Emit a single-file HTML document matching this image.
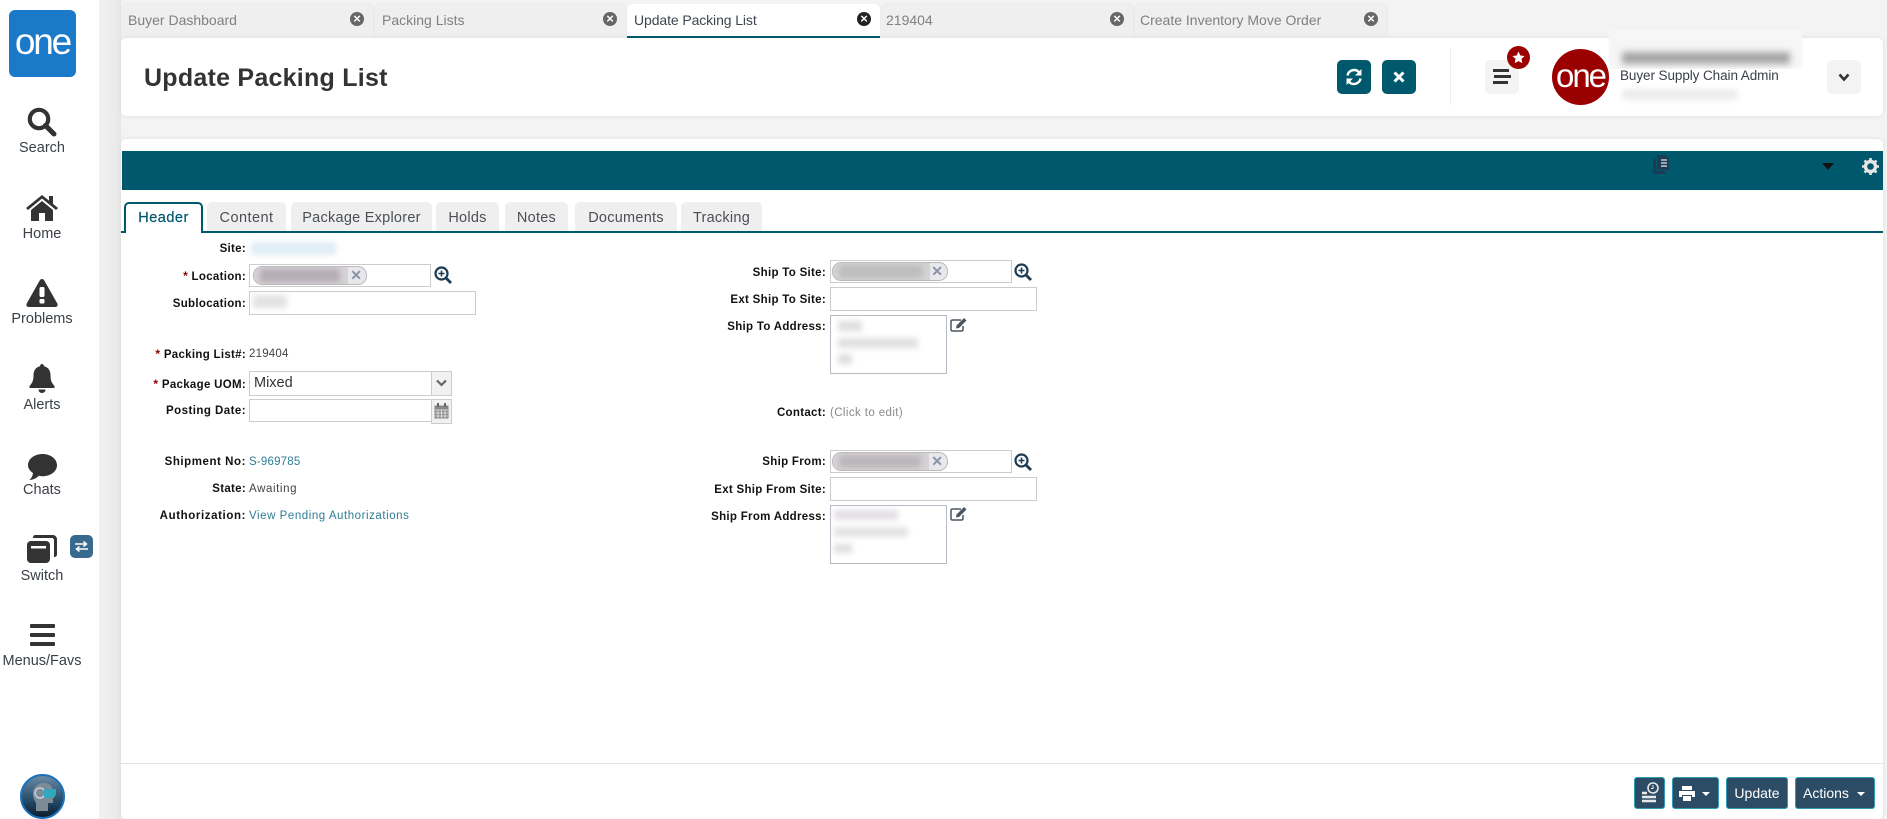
<!DOCTYPE html>
<html><head><meta charset="utf-8"><title>Update Packing List</title>
<style>
*{box-sizing:border-box}
html,body{margin:0;padding:0;width:1887px;height:819px;overflow:hidden;background:#f3f3f3;font-family:"Liberation Sans",sans-serif;color:#333}
.a{position:absolute}
.t{position:absolute;white-space:nowrap;line-height:16px}
.side{left:0;top:0;width:99px;height:819px;background:#fff}
.shade{left:99px;top:0;width:22px;height:819px;background:linear-gradient(90deg,#f1f1f1,#ececec 70%,#e6e6e6)}
.nl{position:absolute;left:0;width:84px;text-align:center;font-size:14.5px;line-height:18px;color:#3a4047;white-space:nowrap}
.tab{position:absolute;top:4px;height:34px;background:#efefef;border-radius:6px 6px 0 0;box-shadow:0 0 2px #ddd}
.tab span{position:absolute;left:7px;top:7px;font-size:14px;line-height:18px;color:#808080;white-space:nowrap}
.tab i{position:absolute;right:9px;top:8px;width:14px;height:14px;border-radius:50%;background:#666;color:#fff;font:bold 13px/14px "Liberation Sans",sans-serif;text-align:center}
.card{background:#fff;border-radius:5px;box-shadow:0 0 4px #ddd}
.btn{position:absolute;top:60px;width:34px;height:34px;border-radius:5px}
.st{position:absolute;top:202px;height:29px;background:#efefef;border-radius:5px 5px 0 0;font-size:14.5px;line-height:33px;color:#4a4f55;text-align:center;white-space:nowrap;letter-spacing:.25px;overflow:hidden}
.l{position:absolute;right:0;text-align:right;font-weight:bold;font-size:11.5px;line-height:16px;color:#111;white-space:nowrap;letter-spacing:.3px}
.l b{color:#8a0000;font-size:12px}
.v{position:absolute;font-size:11.5px;line-height:16px;white-space:nowrap;color:#444;letter-spacing:.2px}
.lk{color:#2e7d94}
.in{position:absolute;background:#fff;border:1px solid #ccc}
.ta{position:absolute;background:#fff;border:1px solid #b9b9c6}
.pill{position:absolute;height:19px;background:#e8e8ec;border:1px solid #bbb;border-radius:9px;overflow:hidden}
.pill u{position:absolute;text-decoration:none;right:4px;top:0;font:bold 14px/17px "Liberation Sans",sans-serif;color:#8a93a6}
.pb{position:absolute;left:0;top:-1px;height:20px;overflow:hidden;background:#d6d3d6}
.bl{position:absolute;filter:blur(3px)}
.bb{position:absolute;top:777px;height:32px;background:#2c4c66;border:1px solid #2f9db5;border-radius:3px;color:#fff;font-size:14px;line-height:30px;text-align:center;white-space:nowrap}
</style></head><body>
<div class="a shade"></div>
<div class="a side"></div>
<div class="a" style="left:9px;top:10px;width:67px;height:67px;background:#1a7ac9;border-radius:6px"></div>
<div class="t" style="left:9px;top:20px;width:67px;text-align:center;color:#fff;font-size:37px;line-height:44px;letter-spacing:-2.2px">one</div>

<svg class="a" style="left:27px;top:107px" width="30" height="30" viewBox="0 0 30 30"><circle cx="12" cy="12" r="9.2" fill="none" stroke="#333" stroke-width="4.2"/><path d="M18.5 18.5L27 27" stroke="#333" stroke-width="5" stroke-linecap="round"/></svg>
<div class="nl" style="top:139px">Search</div>
<svg class="a" style="left:26px;top:195px" width="32" height="26" viewBox="0 0 32 26"><path d="M0 13L16 0l7 5.600V1h4v7.800L32 13l-2 2L16 3.500 2 15z" fill="#333"/><path d="M5 15L16 6l11 9v11h-8v-8h-6v8H5z" fill="#333"/></svg>
<div class="nl" style="top:225px">Home</div>
<svg class="a" style="left:26px;top:279px" width="32" height="28" viewBox="0 0 32 28"><path d="M16 0c1 0 1.800.6 2.300 1.500l13 23c.9 1.600-.1 3.500-2 3.500H2.700c-1.900 0-2.900-1.900-2-3.500l13-23C14.200.6 15 0 16 0z" fill="#333"/><rect x="13.500" y="8" width="5" height="10" rx="1.500" fill="#fff"/><rect x="13.500" y="20" width="5" height="4.500" rx="1" fill="#fff"/></svg>
<div class="nl" style="top:310px">Problems</div>
<svg class="a" style="left:29px;top:364px" width="26" height="29" viewBox="0 0 26 29"><path d="M13 0c1 0 2 1 2 2.200 4.500 1 6.500 4.500 6.500 9 0 6 1.500 8 4 10.800V24H.5v-2C3 19.200 4.500 17.200 4.500 11.200c0-4.500 2-8 6.500-9C11 1 12 0 13 0z" fill="#333"/><path d="M9.500 25.500h7c0 2-1.500 3.500-3.500 3.500s-3.500-1.500-3.500-3.500z" fill="#333"/></svg>
<div class="nl" style="top:396px">Alerts</div>
<svg class="a" style="left:28px;top:454px" width="29" height="26" viewBox="0 0 29 26"><path d="M14.500 0C22.500 0 29 4.900 29 11.200s-6.500 11-14.500 11c-1.300 0-2.500-.1-3.700-.4C8.500 24.300 5 26 1.500 26c2-2 3.300-4.300 3.500-7C2 17 0 14.200 0 11.200 0 4.900 6.500 0 14.500 0z" fill="#333"/></svg>
<div class="nl" style="top:481px">Chats</div>
<svg class="a" style="left:27px;top:535px" width="30" height="28" viewBox="0 0 30 28"><path d="M8 0h18c2 0 4 2 4 4v15c0 2-1 3-3 3V5c0-1-1-2-2-2H6c0-2 1-3 2-3z" fill="#333"/><rect x="0" y="6" width="23" height="22" rx="4" fill="#333"/><rect x="4" y="11" width="15" height="2.500" fill="#fff"/></svg>
<div class="a" style="left:70px;top:535px;width:23px;height:23px;background:#386a8e;border-radius:5px"></div>
<svg class="a" style="left:74px;top:541px" width="15" height="11" viewBox="0 0 15 11"><path d="M1 3h11M9.500.5L12.500 3 9.500 5.500M14 8H3M5.500 5.500L2.500 8l3 2.500" fill="none" stroke="#fff" stroke-width="1.500"/></svg>
<div class="nl" style="top:567px">Switch</div>
<div class="a" style="left:30px;top:624px;width:25px;height:4px;background:#333;border-radius:1px"></div>
<div class="a" style="left:30px;top:633px;width:25px;height:4px;background:#333;border-radius:1px"></div>
<div class="a" style="left:30px;top:642px;width:25px;height:4px;background:#333;border-radius:1px"></div>
<div class="nl" style="top:652px">Menus/Favs</div>
<svg class="a" style="left:20px;top:774px" width="45" height="45" viewBox="0 0 45 45"><defs><linearGradient id="g" x1="0" y1="0" x2="0" y2="1"><stop offset="0" stop-color="#6d8ba5"/><stop offset=".55" stop-color="#29506f"/><stop offset="1" stop-color="#0a1a2b"/></linearGradient></defs><circle cx="22.500" cy="22.500" r="21.500" fill="url(#g)" stroke="#1a72bd" stroke-width="2"/><path d="M13 20c0-7 5-11 11-11 6 0 9 4 9 9l2 5-2 1v5h-5v8H16v-8c-2-3-3-6-3-9z" fill="#7c8b96"/><circle cx="20" cy="19" r="5" fill="none" stroke="#ccd" stroke-width="1.500"/><path d="M24 15h12v6l-5 3h-7z" fill="#2fa9bb"/></svg>

<div class="tab" style="left:121px;width:252px"><span>Buyer Dashboard</span><i>×</i></div>
<div class="tab" style="left:375px;width:251px"><span>Packing Lists</span><i>×</i></div>
<div class="tab" style="left:881px;width:252px"><span style="left:5px">219404</span><i>×</i></div>
<div class="tab" style="left:1135px;width:252px"><span style="left:5px">Create Inventory Move Order</span><i>×</i></div>

<div class="a card" style="left:121px;top:38px;width:1762px;height:78px"></div>
<div class="tab" style="left:627px;width:253px;background:#fff;border-bottom:2px solid #00586c;box-shadow:none"><span style="left:7px;color:#3d4650;letter-spacing:-.1px">Update Packing List</span><i style="background:#222">×</i></div>
<div class="t" style="left:144px;top:62px;font-size:25px;line-height:32px;font-weight:bold;color:#333;letter-spacing:.25px">Update Packing List</div>

<div class="btn" style="left:1337px;background:#00586c"></div>
<svg class="a" style="left:1345px;top:68px" width="18" height="18" viewBox="0 0 18 18"><path d="M2.500 7.500A6.700 6.700 0 0 1 14 4.200" fill="none" stroke="#fff" stroke-width="2.400"/><path d="M16.500 1v6.500H10z" fill="#fff"/><path d="M15.500 10.500A6.700 6.700 0 0 1 4 13.800" fill="none" stroke="#fff" stroke-width="2.400"/><path d="M1.500 17v-6.500H8z" fill="#fff"/></svg>
<div class="btn" style="left:1382px;background:#00586c"></div>
<svg class="a" style="left:1393px;top:71px" width="12" height="12" viewBox="0 0 12 12"><path d="M1.500 1.500l9 9M10.500 1.500l-9 9" stroke="#fff" stroke-width="3"/></svg>
<div class="a" style="left:1450px;top:48px;width:1px;height:57px;background:#ececec"></div>
<div class="btn" style="left:1485px;background:#f3f3f3"></div>
<div class="a" style="left:1493px;top:69px;width:16px;height:3px;background:#333"></div>
<div class="a" style="left:1494px;top:75px;width:17px;height:3px;background:#333"></div>
<div class="a" style="left:1493px;top:81px;width:15px;height:3px;background:#333"></div>
<div class="a" style="left:1507px;top:46px;width:23px;height:23px;border-radius:50%;background:#9a0000"></div>
<svg class="a" style="left:1512px;top:51px" width="13" height="13" viewBox="0 0 24 24"><path d="M12 1l3.400 7.200 7.800 1-5.700 5.400 1.500 7.800L12 18.600l-7 3.800 1.500-7.800L.8 9.200l7.800-1z" fill="#fff"/></svg>
<div class="a" style="left:1552px;top:49px;width:57px;height:56px;border-radius:50%;background:#9a0000"></div>
<div class="t" style="left:1552px;top:54px;width:57px;text-align:center;color:#fff;font-size:33px;line-height:44px;letter-spacing:-2px">one</div>
<div class="a" style="left:1609px;top:30px;width:193px;height:39px;background:#f6f6f6;filter:blur(1px)"></div>
<div class="bl" style="left:1622px;top:52px;width:168px;height:12px;background:#a5a5a5;filter:blur(3.500px)"></div>
<div class="a" style="left:1609px;top:69px;width:193px;height:19px;background:#fff"></div>
<div class="t" style="left:1620px;top:68px;font-size:13.500px;color:#3a3f46;letter-spacing:-.08px">Buyer Supply Chain Admin</div>
<div class="bl" style="left:1622px;top:89px;width:115px;height:11px;background:#ececec"></div>
<div class="btn" style="left:1827px;background:#f3f3f3"></div>
<svg class="a" style="left:1838px;top:73px" width="12" height="9" viewBox="0 0 12 9"><path d="M1.500 1.500L6 6.500l4.500-5" fill="none" stroke="#333" stroke-width="2.600"/></svg>

<div class="a card" style="left:121px;top:139px;width:1762px;height:680px"></div>
<div class="a" style="left:122px;top:151px;width:1761px;height:39px;background:#00586c"></div>
<svg class="a" style="left:1653px;top:155px" width="17" height="19" viewBox="0 0 17 19"><path d="M0 4h3v12h9v3H0z" fill="#1d3b52"/><path d="M4 0h8l4 4v11H4z" fill="#1d3b52"/><path d="M8 5h6M8 8h6M8 11h6" stroke="#dfe6ea" stroke-width="1.200"/></svg>
<div class="a" style="left:1822px;top:163px;width:0;height:0;border-left:6px solid transparent;border-right:6px solid transparent;border-top:7px solid #111"></div>
<svg class="a" style="left:1862px;top:158px" width="17" height="17" viewBox="0 0 17 17"><circle cx="8.500" cy="8.500" r="5" fill="none" stroke="#e6e6e6" stroke-width="3.400"/><path d="M8.500 0v3M8.500 14v3M0 8.500h3M14 8.500h3M2.500 2.500l2 2M12.500 12.500l2 2M14.500 2.500l-2 2M4.500 12.500l-2 2" stroke="#e6e6e6" stroke-width="2.600"/></svg>

<div class="a" style="left:121px;top:231px;width:1762px;height:2px;background:#00586c"></div>
<div class="a" style="left:124px;top:202px;width:79px;height:31px;background:#fff;border:2px solid #00586c;border-bottom:0;border-radius:5px 5px 0 0"></div>
<div class="t" style="left:124px;top:208px;width:79px;text-align:center;font-size:14.500px;color:#00586c;line-height:20px;letter-spacing:.5px;font-weight:500;-webkit-text-stroke:.2px #00586c">Header</div>
<div class="st" style="left:207px;width:79px;letter-spacing:.45px">Content</div>
<div class="st" style="left:291px;width:141px">Package Explorer</div>
<div class="st" style="left:436px;width:63px">Holds</div>
<div class="st" style="left:505px;width:63px">Notes</div>
<div class="st" style="left:575px;width:102px">Documents</div>
<div class="st" style="left:681px;width:81px">Tracking</div>

<!-- left labels -->
<div class="a" style="left:0;top:0;width:246px;height:0">
<div class="l" style="top:241px">Site:</div>
<div class="l" style="top:268px"><b>*</b> Location:</div>
<div class="l" style="top:296px">Sublocation:</div>
<div class="l" style="top:346px"><b>*</b> Packing List#:</div>
<div class="l" style="top:376px"><b>*</b> Package UOM:</div>
<div class="l" style="top:403px;letter-spacing:.45px">Posting Date:</div>
<div class="l" style="top:454px;letter-spacing:.55px">Shipment No:</div>
<div class="l" style="top:481px">State:</div>
<div class="l" style="top:508px;letter-spacing:.6px">Authorization:</div>
</div>
<div class="bl" style="left:251px;top:242px;width:85px;height:13px;background:#e0edf5"></div>
<div class="in" style="left:249px;top:264px;width:182px;height:23px"></div>
<div class="pill" style="left:253px;top:266px;width:114px"><div class="pb" style="width:94px"><div class="bl" style="left:6px;top:3px;width:80px;height:13px;background:#b5adb4"></div></div><u>✕</u></div>
<svg class="a" style="left:434px;top:266px" width="18" height="18" viewBox="0 0 18 18"><circle cx="7.500" cy="7.500" r="6" fill="none" stroke="#1d3b52" stroke-width="2.200"/><path d="M12 12l5 5" stroke="#1d3b52" stroke-width="2.800"/><path d="M4.500 7.500h6M7.500 4.500v6" stroke="#1d3b52" stroke-width="1.600"/></svg>
<div class="in" style="left:249px;top:291px;width:227px;height:24px"></div>
<div class="bl" style="left:253px;top:295px;width:34px;height:13px;background:#e2e2e2"></div>
<div class="v" style="left:249px;top:346px">219404</div>
<div class="in" style="left:249px;top:371px;width:183px;height:25px"></div>
<div class="t" style="left:254px;top:375px;font-size:14.500px;color:#333">Mixed</div>
<div class="a" style="left:431px;top:371px;width:21px;height:25px;background:#f1f1f1;border:1px solid #ccc"></div>
<svg class="a" style="left:436px;top:379px" width="11" height="8" viewBox="0 0 11 8"><path d="M1 1.500l4.500 4.500 4.500-4.500" fill="none" stroke="#666" stroke-width="2.200"/></svg>
<div class="in" style="left:249px;top:399px;width:183px;height:23px"></div>
<div class="a" style="left:431px;top:399px;width:21px;height:25px;background:#f1f1f1;border:1px solid #ccc"></div>
<svg class="a" style="left:434px;top:403px" width="15" height="16" viewBox="0 0 15 16"><rect x=".5" y="2.500" width="14" height="13" fill="#888" /><path d="M1 7h13M1 10h13M1 13h13M4 7v8M7.500 7v8M11 7v8" stroke="#eee" stroke-width=".8"/><rect x="3" y="0" width="2" height="4" fill="#666"/><rect x="10" y="0" width="2" height="4" fill="#666"/></svg>
<div class="v lk" style="left:249px;top:454px">S-969785</div>
<div class="v" style="left:249px;top:481px;letter-spacing:.6px">Awaiting</div>
<div class="v lk" style="left:249px;top:508px;letter-spacing:.55px">View Pending Authorizations</div>

<!-- right labels -->
<div class="a" style="left:0;top:0;width:826px;height:0">
<div class="l" style="top:265px">Ship To Site:</div>
<div class="l" style="top:292px">Ext Ship To Site:</div>
<div class="l" style="top:319px">Ship To Address:</div>
<div class="l" style="top:405px">Contact:</div>
<div class="l" style="top:454px">Ship From:</div>
<div class="l" style="top:482px">Ext Ship From Site:</div>
<div class="l" style="top:509px">Ship From Address:</div>
</div>
<div class="in" style="left:830px;top:260px;width:182px;height:23px"></div>
<div class="pill" style="left:832px;top:262px;width:116px"><div class="pb" style="width:97px"><div class="bl" style="left:6px;top:3px;width:84px;height:13px;background:#bdbdbd"></div></div><u>✕</u></div>
<svg class="a" style="left:1014px;top:263px" width="18" height="18" viewBox="0 0 18 18"><circle cx="7.500" cy="7.500" r="6" fill="none" stroke="#1d3b52" stroke-width="2.200"/><path d="M12 12l5 5" stroke="#1d3b52" stroke-width="2.800"/><path d="M4.500 7.500h6M7.500 4.500v6" stroke="#1d3b52" stroke-width="1.600"/></svg>
<div class="in" style="left:830px;top:287px;width:207px;height:24px"></div>
<div class="ta" style="left:830px;top:315px;width:117px;height:59px"></div>
<div class="bl" style="left:838px;top:321px;width:24px;height:10px;background:#dedede"></div>
<div class="bl" style="left:838px;top:338px;width:80px;height:10px;background:#e0e0e0"></div>
<div class="bl" style="left:838px;top:354px;width:14px;height:10px;background:#dedede"></div>
<svg class="a" style="left:950px;top:318px" width="17" height="14" viewBox="0 0 17 14"><path d="M11 2H2.500C1.500 2 1 2.500 1 3.500v8c0 1 .5 1.500 1.500 1.500h9c1 0 1.500-.5 1.500-1.500V8" fill="none" stroke="#4a5560" stroke-width="1.500"/><path d="M14 0l2.500 2.500L9 10l-3 .5.5-3z" fill="#4a5560"/></svg>
<div class="v" style="left:830px;top:405px;color:#8a8a8a;letter-spacing:.4px">(Click to edit)</div>
<div class="in" style="left:830px;top:450px;width:182px;height:23px"></div>
<div class="pill" style="left:832px;top:452px;width:116px"><div class="pb" style="width:96px"><div class="bl" style="left:6px;top:3px;width:82px;height:13px;background:#bbb6ba"></div></div><u>✕</u></div>
<svg class="a" style="left:1014px;top:453px" width="18" height="18" viewBox="0 0 18 18"><circle cx="7.500" cy="7.500" r="6" fill="none" stroke="#1d3b52" stroke-width="2.200"/><path d="M12 12l5 5" stroke="#1d3b52" stroke-width="2.800"/><path d="M4.500 7.500h6M7.500 4.500v6" stroke="#1d3b52" stroke-width="1.600"/></svg>
<div class="in" style="left:830px;top:477px;width:207px;height:24px"></div>
<div class="ta" style="left:830px;top:505px;width:117px;height:59px"></div>
<div class="bl" style="left:834px;top:510px;width:64px;height:10px;background:#e2dfe2"></div>
<div class="bl" style="left:834px;top:527px;width:74px;height:10px;background:#e3e3e3"></div>
<div class="bl" style="left:834px;top:544px;width:18px;height:9px;background:#dedede"></div>
<svg class="a" style="left:950px;top:507px" width="17" height="14" viewBox="0 0 17 14"><path d="M11 2H2.500C1.500 2 1 2.500 1 3.500v8c0 1 .5 1.500 1.500 1.500h9c1 0 1.500-.5 1.500-1.500V8" fill="none" stroke="#4a5560" stroke-width="1.500"/><path d="M14 0l2.500 2.500L9 10l-3 .5.5-3z" fill="#4a5560"/></svg>

<div class="a" style="left:121px;top:763px;width:1762px;height:1px;background:#e4e4e4"></div>
<div class="bb" style="left:1634px;width:31px"></div>
<svg class="a" style="left:1641px;top:782px" width="18" height="22" viewBox="0 0 18 22"><circle cx="12" cy="6" r="5" fill="none" stroke="#e8e8e8" stroke-width="1.600"/><path d="M12 3v3.500h-2" stroke="#e8e8e8" fill="none"/><path d="M1 11h5M1 15h14M1 19h14" stroke="#e8e8e8" stroke-width="2.400"/></svg>
<div class="bb" style="left:1672px;width:47px"></div>
<svg class="a" style="left:1679px;top:786px" width="16" height="15" viewBox="0 0 16 15"><path d="M3 0h10v4H3z" fill="#fff"/><path d="M0 5h16v6h-3V9H3v2H0z" fill="#fff"/><path d="M4 10h8v5H4z" fill="#fff"/></svg>
<div class="a" style="left:1702px;top:792px;border-left:4px solid transparent;border-right:4px solid transparent;border-top:4px solid #fff"></div>
<div class="bb" style="left:1726px;width:62px">Update</div>
<div class="bb" style="left:1795px;width:80px;text-align:left;padding-left:7px">Actions</div>
<div class="a" style="left:1857px;top:792px;border-left:4px solid transparent;border-right:4px solid transparent;border-top:4px solid #fff"></div>
</body></html>
